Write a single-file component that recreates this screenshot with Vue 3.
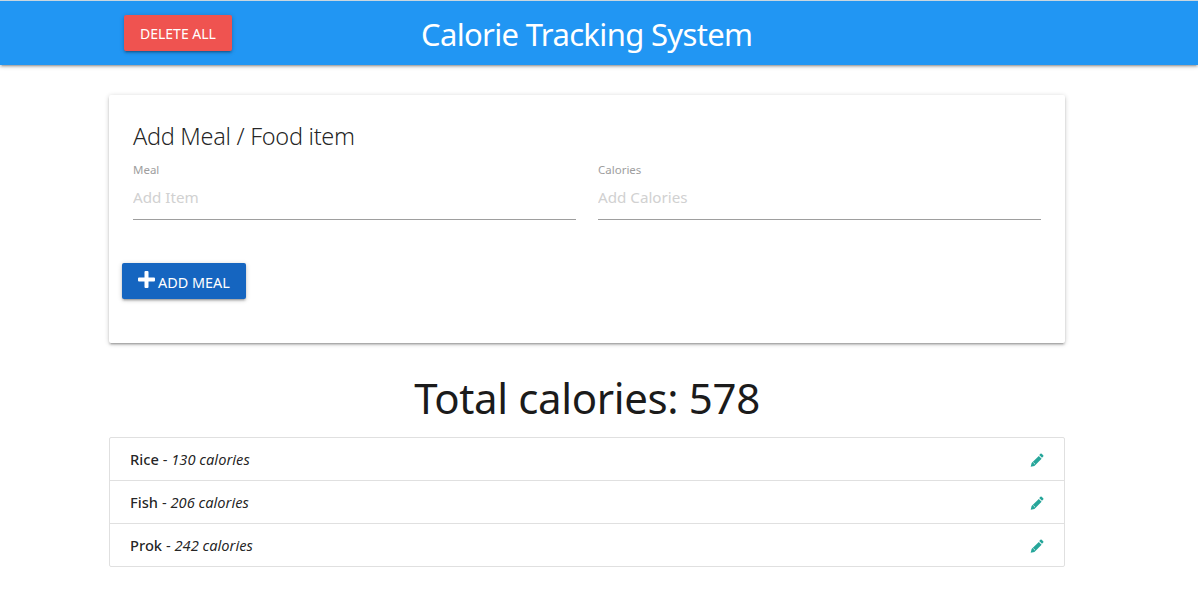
<script setup>
const items = [
  { name: 'Rice', cal: 130 },
  { name: 'Fish', cal: 206 },
  { name: 'Prok', cal: 242 }
]
</script>

<template>
  <div class="page">
    <header class="nav">
      <div class="nav-inner">
        <button class="btn red">DELETE ALL</button>
        <h1 class="brand">Calorie Tracking System</h1>
      </div>
    </header>
    <main class="container">
      <section class="card">
        <h2 class="card-title">Add Meal / Food item</h2>
        <div class="fields">
          <label class="field">
            <span class="label">Meal</span>
            <input type="text" placeholder="Add Item" />
          </label>
          <label class="field">
            <span class="label">Calories</span>
            <input type="text" placeholder="Add Calories" />
          </label>
        </div>
        <button class="btn blue">
          <svg class="plus" viewBox="0 0 17 17" width="17" height="17"><path d="M6.500 1a1 1 0 0 1 1-1h2a1 1 0 0 1 1 1v5.500H16a1 1 0 0 1 1 1v2a1 1 0 0 1-1 1h-5.500V16a1 1 0 0 1-1 1h-2a1 1 0 0 1-1-1v-5.500H1a1 1 0 0 1-1-1v-2a1 1 0 0 1 1-1h5.500z" fill="#fff" /></svg>
          <span class="btn-text">ADD MEAL</span>
        </button>
      </section>
      <h3 class="total">Total calories: 578</h3>
      <ul class="list">
        <li v-for="item in items" :key="item.name" class="row">
          <span><strong>{{ item.name }}</strong> - <em>{{ item.cal }} calories</em></span>
          <svg class="pencil" viewBox="0 0 14 14" width="14" height="14">
            <path d="M10.400.8a.9.9 0 0 1 1.300 0l1.500 1.500a.9.9 0 0 1 0 1.300l-1.200 1.200-2.800-2.800zM8.800 2.900l2.800 2.800-7.200 7.200-3.700.9.900-3.700z" fill="#26a69a" />
            <path d="M3.300 9.500l1.700 1.700" stroke="#fff" stroke-width=".7" fill="none" />
          </svg>
        </li>
      </ul>
    </main>
  </div>
</template>

<style>
html, body { margin: 0; background: #fff; }
</style>

<style scoped>
.page {
  font-family: "Noto Sans", "Open Sans", sans-serif;
  color: rgba(0, 0, 0, 0.87);
}
.nav {
  border-top: 1px solid #c9d6df;
  height: 64px;
  background: #2196f3;
  box-shadow: 0 2px 2px 0 rgba(0,0,0,.14), 0 3px 1px -2px rgba(0,0,0,.12), 0 1px 5px 0 rgba(0,0,0,.2);
}
.nav-inner {
  width: 956px;
  margin: 0 0 0 109px;
  height: 100%;
  display: flex;
  align-items: center;
  padding-left: 15px;
  box-sizing: border-box;
}
.brand {
  margin: 2px 0 0 189px;
  font-size: 31px;
  font-weight: 400;
  color: #fff;
  letter-spacing: -0.65px;
  white-space: nowrap;
}
.btn {
  height: 36px;
  border: 0;
  border-radius: 2px;
  padding: 0 16px;
  color: #fff;
  font: inherit;
  font-size: 14px;
  letter-spacing: 0;
  display: inline-flex;
  align-items: center;
  box-shadow: 0 2px 2px 0 rgba(0,0,0,.14), 0 3px 1px -2px rgba(0,0,0,.12), 0 1px 5px 0 rgba(0,0,0,.2);
}
.red { background: #ef5350; }
.blue { background: #1565c0; margin-left: -11px; gap: 3px; font-size: 14.4px; }
.plus { margin: -3px 0 0 0; }
.btn-text { margin-top: 2px; }
.container { width: 956px; margin: 0 0 0 109px; }
.card {
  margin-top: 30px;
  height: 248px;
  box-sizing: border-box;
  padding: 25px 24px 24px;
  border-radius: 2px;
  background: #fff;
  box-shadow: 0 2px 2px 0 rgba(0,0,0,.14), 0 3px 1px -2px rgba(0,0,0,.12), 0 1px 5px 0 rgba(0,0,0,.2);
}
.card-title {
  margin: 0;
  font-size: 23.5px;
  font-weight: 300;
  line-height: 32px;
  letter-spacing: -0.3px;
}
.fields {
  display: grid;
  grid-template-columns: 443px 443px;
  gap: 22px;
  margin-top: 11px;
}
.field { display: block; }
.label {
  display: block;
  font-size: 11.5px;
  line-height: 14px;
  color: #9e9e9e;
}
input {
  display: block;
  width: 100%;
  box-sizing: border-box;
  height: 42px;
  margin-top: 1px;
  padding: 0 0 4px;
  border: 0;
  border-bottom: 1px solid #9e9e9e;
  outline: 0;
  font: inherit;
  font-size: 15.2px;
  background: transparent;
}
input::placeholder { color: #d1d1d1; opacity: 1; }
.card .blue { margin-top: 43px; }
.total {
  margin: 27px 0 0;
  text-align: center;
  font-size: 42px;
  font-weight: 400;
  line-height: 56px;
  letter-spacing: -0.36px;
  color: #1b1b1b;
}
.list {
  list-style: none;
  margin: 11px 0 0;
  padding: 0;
  border: 1px solid #e0e0e0;
  border-radius: 2px;
}
.row {
  height: 43px;
  box-sizing: border-box;
  padding: 0 20px;
  display: flex;
  align-items: center;
  justify-content: space-between;
  font-size: 14.7px;
  border-bottom: 1px solid #e0e0e0;
}
.row:last-child { border-bottom: 0; height: 42px; }
strong { font-weight: 500; }
.pencil { margin-top: 1px; }
</style>
